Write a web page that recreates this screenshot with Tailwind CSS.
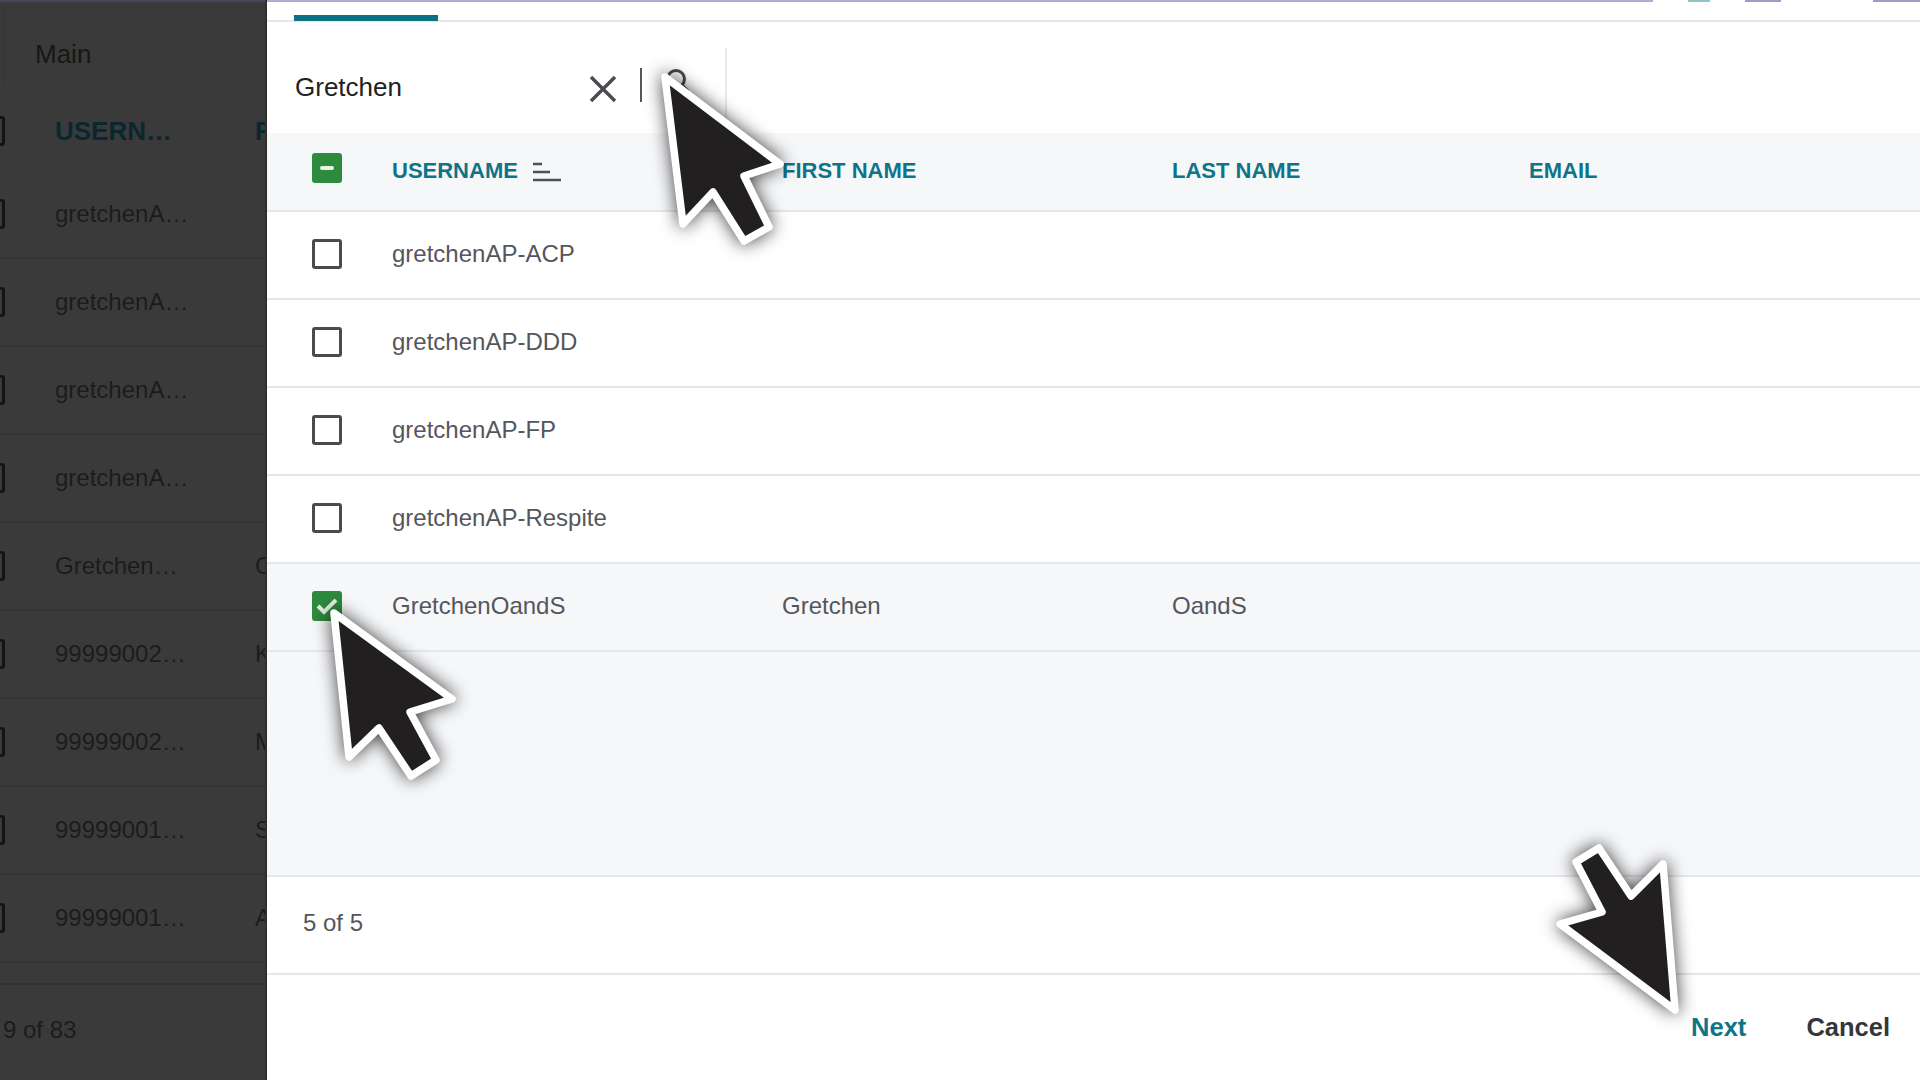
<!DOCTYPE html>
<html lang="en">
<head>
  <meta charset="UTF-8" />
  <title>Add Users</title>
  <meta name="viewport" content="width=device-width, initial-scale=1.0" />
  <script src="https://cdn.jsdelivr.net/npm/@tailwindcss/browser@4"></script>
</head>
<body class="relative flex h-[1080px] w-[1920px] overflow-hidden bg-white font-['Liberation_Sans',sans-serif]">

  <!-- Dimmed page behind the dialog -->
  <aside class="flex h-full w-[267px] shrink-0 flex-col overflow-hidden border-r-2 border-[#2e2e2e] bg-[#3a3a3a] text-[24px] text-[#1c1c1c]">
    <div class="h-[2px] shrink-0 bg-[#4a4458]"></div>
    <div class="flex h-[89px] shrink-0 items-start">
      <div class="mt-[6px] h-[78px] w-[5px] border-r border-[#333333]"></div>
      <span class="ml-[30px] mt-[37px] text-[26px] leading-[30px] text-[#171717]">Main</span>
    </div>
    <div class="flex h-[80px] shrink-0 items-center font-bold text-[#0a2630]">
      <span class="-ml-[25px] h-[30px] w-[30px] shrink-0 rounded-[3px] border-[3px] border-[#141414]"></span>
      <span class="ml-[50px] w-[200px] shrink-0 text-[26px]">USERN…</span>
      <span class="text-[26px]">FIRST</span>
    </div>

    <div id="bgRows"></div>
    <div class="h-[22px] shrink-0 border-b-2 border-[#303030]"></div>
    <div class="flex flex-1 items-center pb-[6px] pl-[3px]">9 of 83</div>
  </aside>

  <!-- Dialog -->
  <main class="flex h-full min-w-0 flex-1 flex-col">
    <div class="flex h-[2px] shrink-0 bg-white">
      <div class="w-[1386px] bg-[#b5a8d0]"></div>
      <div class="w-[35px]"></div>
      <div class="w-[22px] bg-[#8fc4c4]"></div>
      <div class="w-[35px]"></div>
      <div class="w-[36px] bg-[#a79bc6]"></div>
      <div class="w-[92px]"></div>
      <div class="flex-1 bg-[#a79bc6]"></div>
    </div>

    <!-- Tabs -->
    <div class="h-[20px] shrink-0 border-b-2 border-[#e5e7eb] pl-[27px]">
      <div class="mt-[13px] h-[6px] w-[144px] bg-[#0b7285]"></div>
    </div>

    <!-- Search -->
    <div class="flex h-[111px] shrink-0">
      <div class="mt-[26px] flex h-[85px] w-[460px] items-start border-r-2 border-[#e8e9ec] pl-[28px]">
        <span class="mt-[23px] w-[294px] text-[26px] leading-[32px] text-[#222222]">Gretchen</span>
        <svg class="mt-[27px]" width="28" height="28" viewBox="0 0 28 28" fill="none" stroke="#4a4a4f" stroke-width="3.4">
          <path d="M2 2 L26 26 M26 2 L2 26" />
        </svg>
        <div class="ml-[23px] mt-[20px] h-[34px] w-[2px] bg-[#55565a]"></div>
        <svg class="ml-[22px] mt-[19px]" width="26" height="26" viewBox="0 0 26 26" fill="none" stroke="#4a4a4f" stroke-width="3">
          <circle cx="12" cy="12" r="8.5" />
          <path d="M18 18 L24 24" />
        </svg>
      </div>
    </div>

    <!-- Table header -->
    <div class="flex h-[79px] shrink-0 items-center border-b-2 border-[#e5e7eb] bg-[#f6f7f9] pb-[2px] text-[22px] font-bold text-[#0f7488]">
      <span class="ml-[45px] -mt-[6px] flex h-[30px] w-[30px] shrink-0 items-center justify-center rounded-[3px] bg-[#2e8b3d]">
        <span class="h-[4px] w-[14px] rounded-sm bg-[#e8f2e9]"></span>
      </span>
      <div class="ml-[50px] flex w-[390px] shrink-0 items-center">
        <span>USERNAME</span>
        <svg class="ml-[15px] mt-[3px]" width="28" height="20" viewBox="0 0 28 20" fill="none" stroke="#4f5054" stroke-width="2.6">
          <path d="M0 2 H9 M0 10 H17 M0 18 H28" />
        </svg>
      </div>
      <span class="w-[390px] shrink-0">FIRST NAME</span>
      <span class="w-[357px] shrink-0">LAST NAME</span>
      <span>EMAIL</span>
    </div>

    <!-- Table rows -->
    <div id="rows" class="shrink-0 text-[24px] text-[#55565b]"></div>

    <div class="flex-1 bg-[#f6f7f9]"></div>

    <!-- Count -->
    <div class="flex h-[100px] shrink-0 items-center border-y-2 border-[#e5e7eb] pb-[4px] pl-[36px] text-[24px] text-[#55565b]">5 of 5</div>

    <!-- Actions -->
    <div class="flex h-[105px] shrink-0 items-center justify-end gap-[60px] pr-[30px] text-[25.5px] font-bold">
      <button class="text-[#0f7488]">Next</button>
      <button class="text-[#33363c]">Cancel</button>
    </div>
  </main>

  <!-- Tutorial cursors drawn over the screenshot -->
  <svg class="pointer-events-none absolute inset-0 drop-shadow-[0_0_9px_rgba(0,0,0,0.75)]" width="1920" height="1080" viewBox="0 0 1920 1080" fill="#221f20" stroke="#ffffff" stroke-width="7.5" stroke-linejoin="round">
    <polygon points="665,77 780,164 744,176 769,227 744,241 713,192 683,224" />
    <polygon points="334,613 452,699 410,712 436,760 411,776 379,728 349,757" />
    <polygon points="1675,1010 1663,864 1631,896 1599,848 1576,862 1602,912 1560,924" />
  </svg>

  <script>
    // Rows behind the overlay
    const bgRows = [
      ["gretchenA…", ""], ["gretchenA…", ""], ["gretchenA…", ""], ["gretchenA…", ""],
      ["Gretchen…", "G"], ["99999002…", "K"], ["99999002…", "M"], ["99999001…", "S"], ["99999001…", "A"]
    ];
    document.getElementById("bgRows").innerHTML = bgRows.map(r => `
      <div class="flex h-[88px] items-center border-b-2 border-[#333333]">
        <span class="-ml-[25px] h-[30px] w-[30px] shrink-0 rounded-[3px] border-[3px] border-[#141414]"></span>
        <span class="ml-[50px] w-[200px] shrink-0">${r[0]}</span>
        <span>${r[1]}</span>
      </div>`).join("");

    // Dialog rows
    const users = [
      { name: "gretchenAP-ACP" },
      { name: "gretchenAP-DDD" },
      { name: "gretchenAP-FP" },
      { name: "gretchenAP-Respite" },
      { name: "GretchenOandS", first: "Gretchen", last: "OandS", checked: true }
    ];
    const box = `<span class="ml-[45px] h-[30px] w-[30px] shrink-0 rounded-[3px] border-[3px] border-[#4a4b50] bg-white"></span>`;
    const checkedBox = `<span class="ml-[45px] flex h-[30px] w-[30px] shrink-0 items-center justify-center rounded-[3px] bg-[#2e8b3d]">
        <svg width="22" height="18" viewBox="0 0 22 18" fill="none" stroke="#e8f2e9" stroke-width="4"><path d="M2 9 L8 15 L20 3" /></svg>
      </span>`;
    document.getElementById("rows").innerHTML = users.map(u => `
      <div class="flex h-[88px] items-center border-b-2 border-[#e5e7eb] pb-[2px] ${u.checked ? "bg-[#f6f7f9]" : "bg-white"}">
        ${u.checked ? checkedBox : box}
        <span class="ml-[50px] w-[390px] shrink-0">${u.name}</span>
        <span class="w-[390px] shrink-0">${u.first || ""}</span>
        <span>${u.last || ""}</span>
      </div>`).join("");
  </script>
</body>
</html>
